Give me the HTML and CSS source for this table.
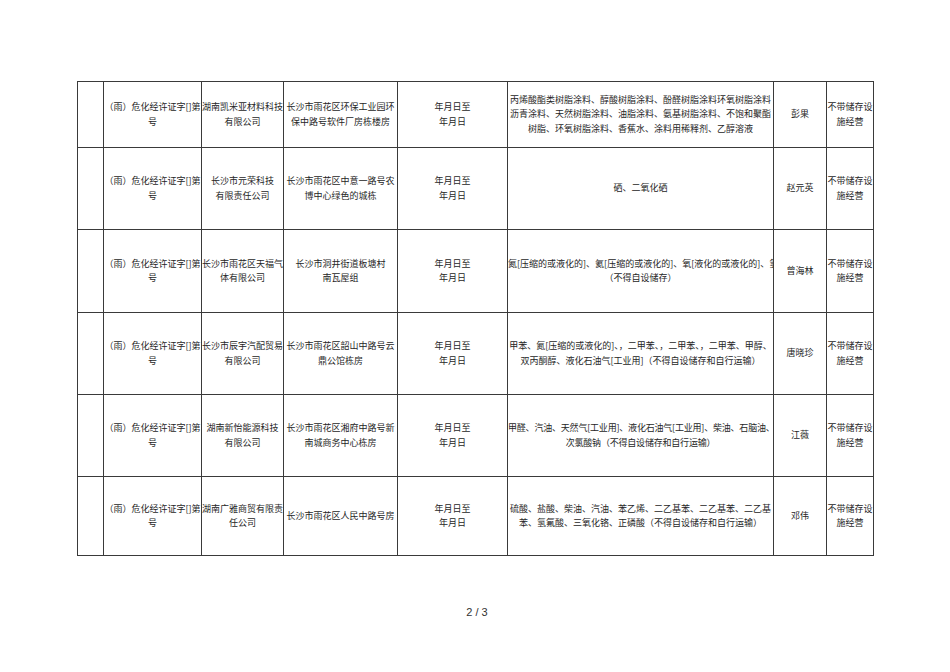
FILE: index.html
```html
<!DOCTYPE html>
<html lang="zh-CN">
<head>
<meta charset="utf-8">
<title>危化经营许可</title>
<link rel="stylesheet" href="styles.css">
</head>
<body>
<div class="page">
  <table class="grid">
    <colgroup>
      <col class="c1"><col class="c2"><col class="c3"><col class="c4"><col class="c5"><col class="c6"><col class="c7"><col class="c8">
    </colgroup>
    <tbody>
      <tr class="r1">
        <td></td>
        <td><div class="cell">（雨）危化经许证字[]第<br>号</div></td>
        <td><div class="cell">湖南凯米亚材料科技<br>有限公司</div></td>
        <td><div class="cell">长沙市雨花区环保工业园环<br>保中路号软件厂房栋楼房</div></td>
        <td><div class="cell">年月日至<br>年月日</div></td>
        <td><div class="cell">丙烯酸酯类树脂涂料、醇酸树脂涂料、酚醛树脂涂料环氧树脂涂料<br>沥青涂料、天然树脂涂料、油脂涂料、氨基树脂涂料、不饱和聚酯<br>树脂、环氧树脂涂料、香蕉水、涂料用稀释剂、乙醇溶液</div></td>
        <td><div class="cell">彭果</div></td>
        <td><div class="cell">不带储存设<br>施经营</div></td>
      </tr>
      <tr class="r2">
        <td></td>
        <td><div class="cell">（雨）危化经许证字[]第<br>号</div></td>
        <td><div class="cell">长沙市元荣科技<br>有限责任公司</div></td>
        <td><div class="cell">长沙市雨花区中意一路号农<br>博中心绿色的城栋</div></td>
        <td><div class="cell">年月日至<br>年月日</div></td>
        <td><div class="cell">硒、二氧化硒</div></td>
        <td><div class="cell">赵元英</div></td>
        <td><div class="cell">不带储存设<br>施经营</div></td>
      </tr>
      <tr class="r3">
        <td></td>
        <td><div class="cell">（雨）危化经许证字[]第<br>号</div></td>
        <td><div class="cell">长沙市雨花区天福气<br>体有限公司</div></td>
        <td><div class="cell">长沙市洞井街道板塘村<br>南瓦屋组</div></td>
        <td><div class="cell">年月日至<br>年月日</div></td>
        <td><div class="cell">氮[压缩的或液化的]、氦[压缩的或液化的]、氧[液化的或液化的]、氢<br>（不得自设储存）</div></td>
        <td><div class="cell">曾海林</div></td>
        <td><div class="cell">不带储存设<br>施经营</div></td>
      </tr>
      <tr class="r4">
        <td></td>
        <td><div class="cell">（雨）危化经许证字[]第<br>号</div></td>
        <td><div class="cell">长沙市辰宇汽配贸易<br>有限公司</div></td>
        <td><div class="cell">长沙市雨花区韶山中路号云<br>鼎公馆栋房</div></td>
        <td><div class="cell">年月日至<br>年月日</div></td>
        <td><div class="cell">甲苯、氮[压缩的或液化的]、，二甲苯、，二甲苯、，二甲苯、甲醇、<br>双丙酮醇、液化石油气[工业用]（不得自设储存和自行运输）</div></td>
        <td><div class="cell">唐晓珍</div></td>
        <td><div class="cell">不带储存设<br>施经营</div></td>
      </tr>
      <tr class="r5">
        <td></td>
        <td><div class="cell">（雨）危化经许证字[]第<br>号</div></td>
        <td><div class="cell">湖南新怡能源科技<br>有限公司</div></td>
        <td><div class="cell">长沙市雨花区湘府中路号新<br>南城商务中心栋房</div></td>
        <td><div class="cell">年月日至<br>年月日</div></td>
        <td><div class="cell tight">甲醛、汽油、天然气[工业用]、液化石油气[工业用]、柴油、石脑油、<br>次氯酸钠（不得自设储存和自行运输）</div></td>
        <td><div class="cell">江薇</div></td>
        <td><div class="cell">不带储存设<br>施经营</div></td>
      </tr>
      <tr class="r6">
        <td></td>
        <td><div class="cell">（雨）危化经许证字[]第<br>号</div></td>
        <td><div class="cell">湖南广雅商贸有限责<br>任公司</div></td>
        <td><div class="cell">长沙市雨花区人民中路号房</div></td>
        <td><div class="cell">年月日至<br>年月日</div></td>
        <td><div class="cell">硫酸、盐酸、柴油、汽油、苯乙烯、二乙基苯、二乙基苯、二乙基<br>苯、氢氟酸、三氧化铬、正磷酸（不得自设储存和自行运输）</div></td>
        <td><div class="cell">邓伟</div></td>
        <td><div class="cell">不带储存设<br>施经营</div></td>
      </tr>
    </tbody>
  </table>
  <div class="pager">2 / 3</div>
</div>
</body>
</html>
```

FILE: styles.css
```css
html, body {
  margin: 0;
  padding: 0;
  background: #ffffff;
}

.page {
  width: 950px;
  height: 672px;
  padding: 81px 0 0 77px;
  box-sizing: border-box;
  display: flex;
  flex-direction: column;
  font-family: "Noto Sans CJK SC", "Liberation Sans", sans-serif;
  color: #262626;
}

.grid {
  border-collapse: collapse;
  table-layout: fixed;
  width: 796px;
}

.grid td {
  border: 1px solid #3a3a3a;
  padding: 0;
  vertical-align: middle;
  text-align: center;
  overflow: hidden;
}

.cell {
  font-size: 9px;
  line-height: 14.3px;
  white-space: nowrap;
  overflow: hidden;
  text-align: center;
}

.cell.tight {
  letter-spacing: -0.2px;
}

.c1 { width: 26px; }
.c2 { width: 98px; }
.c3 { width: 82px; }
.c4 { width: 114px; }
.c5 { width: 110px; }
.c6 { width: 266px; }
.c7 { width: 53px; }
.c8 { width: 47px; }

.r1 { height: 66px; }
.r2 { height: 82px; }
.r3 { height: 83px; }
.r4 { height: 82px; }
.r5 { height: 82px; }
.r6 { height: 79px; }

.pager {
  width: 796px;
  margin-top: 50px;
  text-align: center;
  font-family: "Liberation Sans", sans-serif;
  font-size: 11px;
  color: #333333;
  transform: translateX(2px);
}
```
